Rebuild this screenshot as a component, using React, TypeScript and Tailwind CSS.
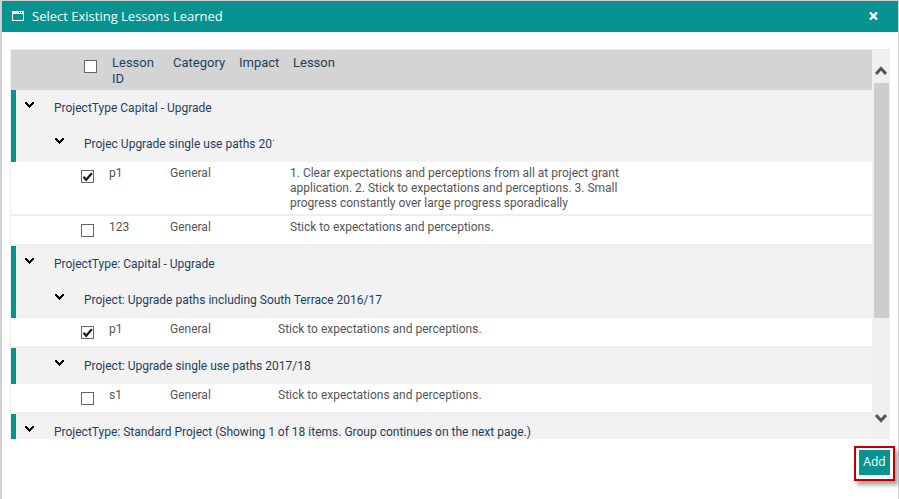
import React, { useState } from "react";

type Lesson = { id: string; category: string; text: string; checked?: boolean };
type Group = { type?: string; project?: string; compact?: boolean; lessons: Lesson[] };

const STICK = "Stick to expectations and perceptions.";

const groups: Group[] = [
  {
    type: "ProjectType Capital - Upgrade",
    project: "Projec Upgrade single use paths 201",
    lessons: [
      {
        id: "p1",
        category: "General",
        checked: true,
        text: "1. Clear expectations and perceptions from all at project grant application. 2. Stick to expectations and perceptions. 3. Small progress constantly over large progress sporadically",
      },
      { id: "123", category: "General", text: STICK },
    ],
  },
  {
    type: "ProjectType: Capital - Upgrade",
    project: "Project: Upgrade paths including South Terrace 2016/17",
    compact: true,
    lessons: [{ id: "p1", category: "General", text: STICK, checked: true }],
  },
  {
    project: "Project: Upgrade single use paths 2017/18",
    compact: true,
    lessons: [{ id: "s1", category: "General", text: STICK }],
  },
  {
    type: "ProjectType: Standard Project (Showing 1 of 18 items. Group continues on the next page.)",
    lessons: [],
  },
];

const CheckBox = ({ label, checked = false }: { label: string; checked?: boolean }) => {
  const [on, setOn] = useState(checked);
  return (
    <span className="relative block size-[13px]">
      <input
        type="checkbox"
        aria-label={label}
        checked={on}
        onChange={() => setOn(!on)}
        className="block size-[13px] appearance-none border border-[#666] bg-white"
      />
      {on && (
        <svg viewBox="0 0 13 13" className="pointer-events-none absolute inset-0 size-[13px]">
          <path d="M2.5 6.8 5.2 9.8 10.8 3.2" fill="none" stroke="#1a1a1a" strokeWidth="2.2" />
        </svg>
      )}
    </span>
  );
};

const Chevron = () => (
  <svg viewBox="0 0 9 6" className="h-[6px] w-[9px]" shapeRendering="crispEdges">
    <path d="M0 0h2v1h1v1h1v1h1v-1h1v-1h1v-1h2v2h-1v1h-1v1h-1v1h-1v1h-1v-1h-1v-1h-1v-1h-1v-1h-1z" fill="#000" />
  </svg>
);

const GroupRow = ({ text, nested, clipped }: { text: string; nested?: boolean; clipped?: boolean }) => (
  <tr className="h-9 bg-[#f2f2f2] text-[#1f3f5b]">
    <td colSpan={6} className="border-l-[5px] border-[#089391] p-0 align-top">
      <div className={nested ? "flex gap-5 pl-[39px]" : "flex gap-5 pl-[9px]"}>
        <button type="button" aria-label="Collapse group" className="h-[30px] w-[9px]">
          <Chevron />
        </button>
        <span className={clipped ? "w-[190px] overflow-hidden pt-[10px] leading-4 whitespace-nowrap" : "pt-[10px] leading-4 whitespace-nowrap"}>
          {text}
        </span>
      </div>
    </td>
  </tr>
);

const LessonRow = ({ lesson, compact }: { lesson: Lesson; compact?: boolean }) => (
  <tr className="h-[30px] bg-white align-top leading-[15px] text-[#555] *:border-b-2 *:border-[#eee]">
    <td className="pt-2 pl-[70px]">
      <CheckBox label={`Select lesson ${lesson.id}`} checked={lesson.checked} />
    </td>
    <td className="pt-1">{lesson.id}</td>
    <td className="pt-1">{lesson.category}</td>
    <td />
    <td className={compact ? "pt-1 pl-[6px]" : "pt-1 pl-[18px]"}>
      <div className="max-w-[345px] pb-[3px]">{lesson.text}</div>
    </td>
    <td />
  </tr>
);

const LessonTable = () => (
  <table className="w-full table-fixed border-separate border-spacing-0 text-[12px]">
    <colgroup>
      <col className="w-[98px]" />
      <col className="w-[61px]" />
      <col className="w-[66px]" />
      <col className="w-[36px]" />
      <col />
      <col className="w-[80px]" />
    </colgroup>
    <thead>
      <tr className="h-10 bg-[#d4d4d4] text-left align-top text-[13px] leading-4 text-[#1f3f5b]">
        <th className="pt-[10px] pl-[73px] font-normal">
          <CheckBox label="Select all lessons" />
        </th>
        <th className="pt-[5px] pr-2 pl-[3px] font-normal">Lesson ID</th>
        <th className="pt-[5px] pl-[3px] font-normal">Category</th>
        <th className="pt-[5px] pl-[3px] font-normal">Impact</th>
        <th className="pt-[5px] pl-[21px] font-normal">Lesson</th>
        <th />
      </tr>
    </thead>
    <tbody>
      {groups.map((group, i) => (
        <React.Fragment key={i}>
          {group.type && <GroupRow text={group.type} />}
          {group.project && <GroupRow text={group.project} nested clipped={i === 0} />}
          {group.lessons.map((lesson) => (
            <LessonRow key={lesson.id} lesson={lesson} compact={group.compact} />
          ))}
        </React.Fragment>
      ))}
    </tbody>
  </table>
);

const ScrollBar = () => (
  <div className="flex w-[18px] shrink-0 flex-col items-center bg-[#f0f0f0] py-4">
    <svg viewBox="0 0 12 9" className="h-[9px] w-3">
      <path d="M1 8 6 2.5 11 8" fill="none" stroke="#555" strokeWidth="3" />
    </svg>
    <div className="mt-2 min-h-0 w-[15px] flex-1">
      <div className="h-[71%] bg-[#cdcdcd]" />
    </div>
    <svg viewBox="0 0 12 9" className="h-[9px] w-3">
      <path d="M1 1 6 6.5 11 1" fill="none" stroke="#555" strokeWidth="3" />
    </svg>
  </div>
);

export default function App() {
  return (
    <div className="flex h-screen flex-col bg-[#d0d0d0] pt-px pr-px pl-[2px] font-['Roboto',sans-serif]">
      <header className="flex h-[31px] shrink-0 items-center bg-[#089391] pr-5 pb-[2px] pl-[10px] text-white">
        <svg viewBox="0 0 12 10" className="h-[10px] w-3" shapeRendering="crispEdges">
          <path d="M0 0h12v10H0zM1 3v6h10V3zM7 1v1h1V1zM9 1v1h1V1z" fill="white" fillRule="evenodd" />
        </svg>
        <h1 className="ml-2 flex-1 font-['Open_Sans',sans-serif] text-[13px] leading-4">Select Existing Lessons Learned</h1>
        <button type="button" aria-label="Close">
          <svg viewBox="0 0 9 8" className="h-2 w-[9px]">
            <path d="M1 .5 8 7.5M8 .5 1 7.5" stroke="white" strokeWidth="2.4" />
          </svg>
        </button>
      </header>

      <main className="flex min-h-0 flex-1 flex-col bg-white pt-[17px]">
        <div className="mr-2 ml-2 flex min-h-0 flex-1 border-t border-l border-[#eee]">
          <div className="min-w-0 flex-1 overflow-hidden">
            <LessonTable />
          </div>
          <ScrollBar />
        </div>

        <footer className="flex h-[60px] shrink-0 items-start justify-end pt-[7px] pr-[3px]">
          <div className="border-2 border-[#c00000] px-[3px] pt-px pb-1 shadow-[3px_4px_4px_rgba(0,0,0,0.35)]">
            <button type="button" className="h-[25px] w-[31px] bg-[#089391] font-['Open_Sans',sans-serif] text-[12px] text-white">
              Add
            </button>
          </div>
        </footer>
      </main>
    </div>
  );
}
